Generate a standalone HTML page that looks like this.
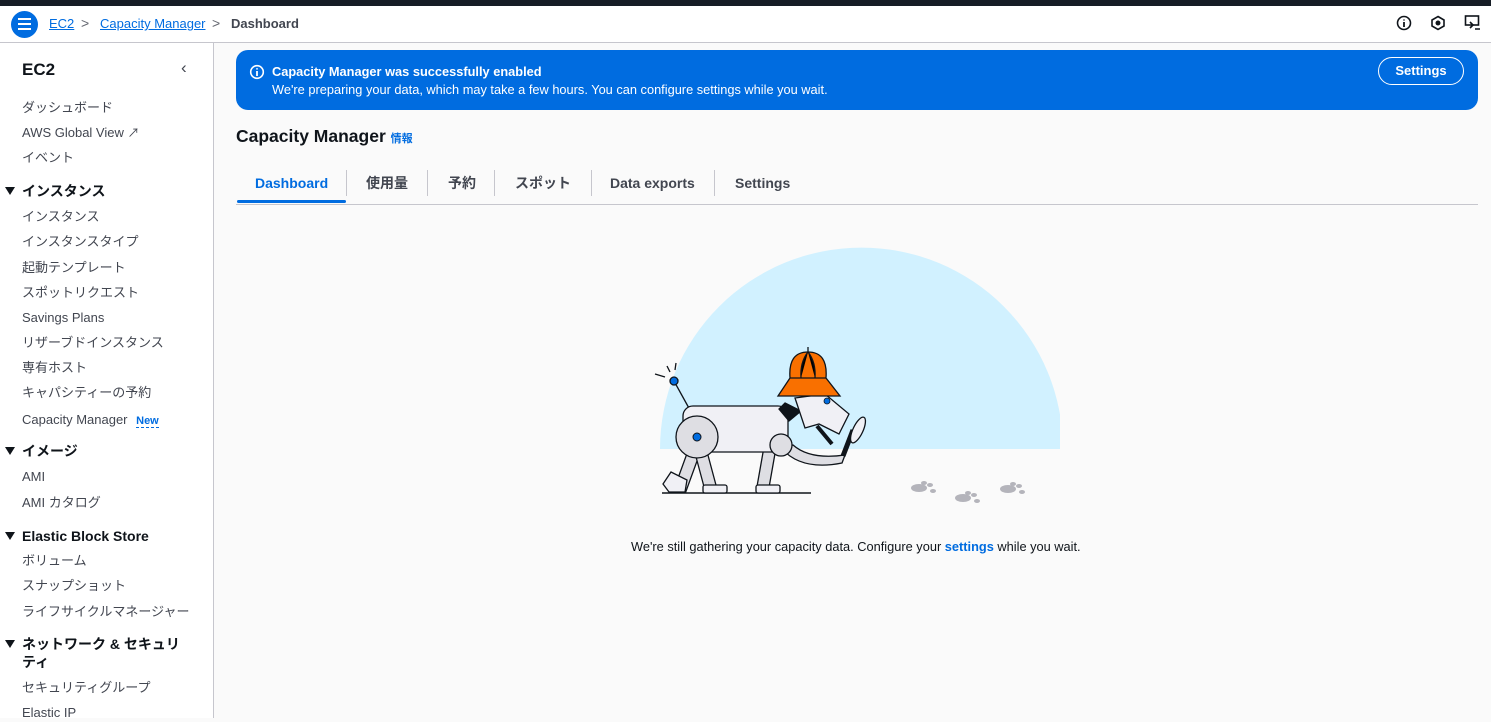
<!DOCTYPE html>
<html><head><meta charset="utf-8"><style>
*{box-sizing:border-box;margin:0;padding:0}
body{width:1491px;height:718px;overflow:hidden;background:#fafafa;font-family:"Liberation Sans","Noto Sans CJK JP",sans-serif;color:#0f141a;position:relative;line-height:18px}
.a{position:absolute;white-space:nowrap;line-height:18px}
.top{position:absolute;left:0;top:0;width:1491px;height:6px;background:#161d26}
.hdr{position:absolute;left:0;top:6px;width:1491px;height:37px;background:#fff;border-bottom:1px solid #c6c6cd}
.side{position:absolute;left:0;top:43px;width:214px;height:675px;background:#fff;border-right:1px solid #c6c6cd}
.si{font-size:13px;color:#424650;left:22px}
.sh{font-size:14px;font-weight:bold;color:#0f141a;left:22px}
.tri{position:absolute;left:-17px;top:5px;width:0;height:0;border-left:5px solid transparent;border-right:5px solid transparent;border-top:8px solid #0f141a}
.tab{font-size:14px;font-weight:bold;color:#424650;top:174px}
.sep{position:absolute;top:170px;width:1px;height:26px;background:#c6c6cd}
</style></head><body>
<div class="top"></div>
<div class="hdr"></div>
<div class="a" style="left:11px;top:11px;width:27px;height:27px;border-radius:50%;background:#006ce0"></div>
<div class="a" style="left:18px;top:18px;width:13px;height:2px;background:#fff;box-shadow:0 5px 0 #fff,0 10px 0 #fff"></div>
<div class="a" style="left:49px;top:15px;font-size:13px;color:#006ce0;text-decoration:underline">EC2</div>
<div class="a" style="left:81px;top:14px;font-size:14px;color:#656871">&gt;</div>
<div class="a" style="left:100px;top:15px;font-size:13px;color:#006ce0;text-decoration:underline">Capacity Manager</div>
<div class="a" style="left:212px;top:14px;font-size:14px;color:#656871">&gt;</div>
<div class="a" style="left:231px;top:15px;font-size:13px;font-weight:bold;color:#424650">Dashboard</div>
<svg class="a" style="left:1396px;top:15px" width="16" height="16"><circle cx="8" cy="8" r="6.5" fill="none" stroke="#0f141a" stroke-width="1.6"/><path d="M8 7v5M8 4.5v1" stroke="#0f141a" stroke-width="1.8"/></svg>
<svg class="a" style="left:1430px;top:15px" width="16" height="16"><path d="M8 1.5l6 3.5v6l-6 3.5-6-3.5v-6z" fill="none" stroke="#0f141a" stroke-width="1.6"/><circle cx="8" cy="8" r="2.5" fill="#0f141a"/></svg>
<svg class="a" style="left:1464px;top:14px" width="18" height="18"><rect x="1.5" y="2" width="13" height="9" fill="none" stroke="#0f141a" stroke-width="1.6"/><path d="M6 8l3 3-3 3M11 15h5" stroke="#0f141a" stroke-width="1.6" fill="none"/></svg>

<div class="side"></div>
<div class="a" style="left:22px;top:61px;font-size:17px;font-weight:bold">EC2</div>
<div class="a" style="left:181px;top:59px;font-size:17px;color:#424650">&#8249;</div>
<div class="a si" style="top:99px">ダッシュボード</div>
<div class="a si" style="top:124px">AWS Global View <span style="font-size:12px">&#x2197;&#xFE0E;</span></div>
<div class="a si" style="top:149px">イベント</div>
<div class="a sh" style="top:182px"><span class="tri"></span>インスタンス</div>
<div class="a si" style="top:208px">インスタンス</div>
<div class="a si" style="top:233px">インスタンスタイプ</div>
<div class="a si" style="top:259px">起動テンプレート</div>
<div class="a si" style="top:284px">スポットリクエスト</div>
<div class="a si" style="top:309px">Savings Plans</div>
<div class="a si" style="top:334px">リザーブドインスタンス</div>
<div class="a si" style="top:359px">専有ホスト</div>
<div class="a si" style="top:384px">キャパシティーの予約</div>
<div class="a si" style="top:411px">Capacity Manager <span style="margin-left:5px;font-size:11px;font-weight:bold;color:#006ce0;border-bottom:1px dashed #006ce0">New</span></div>
<div class="a sh" style="top:442px"><span class="tri"></span>イメージ</div>
<div class="a si" style="top:468px">AMI</div>
<div class="a si" style="top:494px">AMI カタログ</div>
<div class="a sh" style="top:527px"><span class="tri"></span>Elastic Block Store</div>
<div class="a si" style="top:552px">ボリューム</div>
<div class="a si" style="top:577px">スナップショット</div>
<div class="a si" style="top:603px">ライフサイクルマネージャー</div>
<div class="a sh" style="top:635px;line-height:18px"><span class="tri"></span>ネットワーク &amp; セキュリ<br>ティ</div>
<div class="a si" style="top:679px">セキュリティグループ</div>
<div class="a si" style="top:704px">Elastic IP</div>

<div class="a" style="left:236px;top:50px;width:1242px;height:60px;background:#006ce0;border-radius:12px"></div>
<svg class="a" style="left:249px;top:64px" width="16" height="16"><circle cx="8" cy="8" r="6.3" fill="none" stroke="#fff" stroke-width="1.6"/><path d="M8 7v5M8 4.3v1.2" stroke="#fff" stroke-width="1.8"/></svg>
<div class="a" style="left:272px;top:63px;font-size:12.8px;font-weight:bold;color:#fff">Capacity Manager was successfully enabled</div>
<div class="a" style="left:272px;top:81px;font-size:12.8px;color:#fff">We're preparing your data, which may take a few hours. You can configure settings while you wait.</div>
<div class="a" style="left:1378px;top:57px;width:86px;height:28px;border:1.5px solid #fff;border-radius:16px;color:#fff;font-size:13px;font-weight:bold;text-align:center;line-height:25px">Settings</div>

<div class="a" style="left:236px;top:127px;font-size:17.5px;font-weight:bold">Capacity Manager <span style="font-size:11px;color:#006ce0">情報</span></div>

<div class="a tab" style="left:255px;color:#006ce0">Dashboard</div>
<div class="sep" style="left:346px"></div>
<div class="a tab" style="left:366px">使用量</div>
<div class="sep" style="left:427px"></div>
<div class="a tab" style="left:448px">予約</div>
<div class="sep" style="left:494px"></div>
<div class="a tab" style="left:515px">スポット</div>
<div class="sep" style="left:591px"></div>
<div class="a tab" style="left:610px">Data exports</div>
<div class="sep" style="left:714px"></div>
<div class="a tab" style="left:735px">Settings</div>
<div class="a" style="left:236px;top:204px;width:1242px;height:1px;background:#c6c6cd"></div>
<div class="a" style="left:237px;top:200px;width:109px;height:3px;background:#006ce0;border-radius:2px"></div>

<svg class="a" style="left:640px;top:240px" width="420" height="270" viewBox="640 240 420 270">
<path d="M660 449 A201.5 201.5 0 0 1 1063 449 Z" fill="#d1f1ff"/>
<g stroke="#0f141a" stroke-width="1.3">
<line x1="662" y1="493" x2="811" y2="493" stroke-width="1.6"/>
<line x1="674" y1="381" x2="690" y2="410"/>
<line x1="655" y1="374" x2="665" y2="377"/><line x1="667" y1="366" x2="670" y2="372"/><line x1="676" y1="363" x2="675" y2="370"/>
<circle cx="674" cy="381" r="4" fill="#006ce0"/>
<rect x="681" y="451" width="12" height="40" fill="#dedee3" transform="rotate(20 687 471)"/>
<rect x="700" y="451" width="12" height="40" fill="#dedee3" transform="rotate(-15 706 471)"/>
<rect x="760" y="450" width="12" height="40" fill="#dedee3" transform="rotate(10 766 470)"/>
<path d="M663 484 l8 -12 l16 8 l-2 12 h-16z" fill="#f0f0f5"/>
<rect x="703" y="485" width="24" height="8" fill="#f0f0f5" rx="2"/>
<rect x="756" y="485" width="24" height="8" fill="#f0f0f5" rx="2"/>
<rect x="683" y="406" width="105" height="46" rx="10" fill="#f0f0f5"/>
<circle cx="697" cy="437" r="21" fill="#dedee3"/>
<circle cx="697" cy="437" r="4" fill="#006ce0" stroke-width="1"/>
<path d="M782 449 q20 22 60 14 l3 -8 q-35 5 -52 -10z" fill="#dedee3"/>
<line x1="843" y1="456" x2="853" y2="430" stroke-width="5"/>
<ellipse cx="858" cy="430" rx="5" ry="14" fill="#f0f0f5" transform="rotate(25 858 430)"/>
<circle cx="781" cy="445" r="11" fill="#dedee3"/>
<path d="M785 403 l16 8 l-12 10 l-10 -12z" fill="#0f141a"/>
<path d="M795 398 l30 -4 l24 20 l-10 20 l-20 -10 l-14 4z" fill="#f0f0f5"/>
<path d="M817 426 l15 18" stroke-width="4"/>
<circle cx="827" cy="401" r="3" fill="#006ce0" stroke-width="0.8"/>
<path d="M790 378 q-2 -26 18 -26 q20 0 18 26 l14 18 h-62z" fill="#f97000"/>
<path d="M808 352 v-5 M808 352 q-8 10 -7 26 M808 352 q8 10 7 26 M790 378 h36"/>
</g>
<g fill="#b4b4bb">
<ellipse cx="919" cy="488" rx="8" ry="4"/><ellipse cx="930" cy="485" rx="3" ry="2"/><ellipse cx="933" cy="491" rx="3" ry="2"/><ellipse cx="924" cy="483" rx="3" ry="2"/>
<ellipse cx="963" cy="498" rx="8" ry="4"/><ellipse cx="974" cy="495" rx="3" ry="2"/><ellipse cx="977" cy="501" rx="3" ry="2"/><ellipse cx="968" cy="493" rx="3" ry="2"/>
<ellipse cx="1008" cy="489" rx="8" ry="4"/><ellipse cx="1019" cy="486" rx="3" ry="2"/><ellipse cx="1022" cy="492" rx="3" ry="2"/><ellipse cx="1013" cy="484" rx="3" ry="2"/>
</g>
</svg>

<div class="a" style="left:631px;top:538px;font-size:12.8px;color:#0f141a">We're still gathering your capacity data. Configure your <span style="color:#006ce0;font-weight:bold">settings</span> while you wait.</div>
</body></html>
